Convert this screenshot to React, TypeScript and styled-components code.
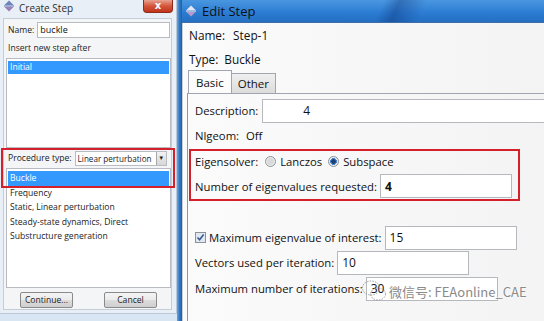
import React from "react";
import styled, { createGlobalStyle } from "styled-components";

const Global = createGlobalStyle`
  html, body { margin: 0; padding: 0; }
  body {
    width: 544px; height: 321px; overflow: hidden;
    background: #cfe0f1;
    font-family: "Open Sans", "Noto Sans", sans-serif;
  }
`;

const Desktop = styled.div`
  position: relative;
  display: flex;
  width: 544px;
  height: 321px;
  overflow: hidden;
  background: linear-gradient(180deg, #e4edf7 0%, #d8e6f4 100%);
`;

/* ---------- left dialog ---------- */
const LeftWin = styled.div`
  position: relative;
  width: 177px;
  height: 314px;
  flex-shrink: 0;
  display: flex;
  flex-direction: column;
  background: #e9eff6;
  border-right: 1px solid #b9c9da;
  border-bottom: 1px solid #b9c9da;
  box-sizing: border-box;
`;

const LeftTitle = styled.div`
  height: 18px;
  display: flex;
  align-items: flex-start;
  padding-left: 3px;
  font-size: 10px;
  color: #2b2b2b;
  line-height: 17px;
  gap: 4px;
`;

const TitleText = styled.span`
  flex: 1;
`;

const CloseBtn = styled.div`
  width: 30px;
  height: 13px;
  margin-right: 3px;
  border-radius: 0 0 4px 4px;
  background: linear-gradient(180deg, #e8a391 0%, #d4553a 50%, #c0341d 100%);
  border: 1px solid #8e2b1b;
  border-top: none;
  box-sizing: border-box;
  display: flex;
  align-items: center;
  justify-content: center;
  color: #fff;
  font-size: 10px;
  font-weight: bold;
  line-height: 1;
  font-family: "DejaVu Sans", sans-serif;
`;

const LeftBody = styled.div`
  flex: 1;
  margin: 0 4px 3px 3px;
  background: #f4f5f6;
  border: 1px solid #c4cdd8;
  display: flex;
  flex-direction: column;
  padding: 2px 1px 0 1px;
  font-size: 8.6px;
  color: #222;
`;

const SmallRow = styled.div<{ $h?: number }>`
  display: flex;
  align-items: center;
  height: ${(p) => p.$h ?? 16}px;
  padding-left: 3px;
  gap: 3px;
  white-space: nowrap;
`;

const SmallInput = styled.div<{ $w: number }>`
  width: ${(p) => p.$w}px;
  height: 16px;
  box-sizing: border-box;
  background: #fff;
  border: 1px solid #b8bcc2;
  display: flex;
  align-items: center;
  padding-left: 2px;
  font-size: 9px;
  color: #111;
`;

const ListBox = styled.div<{ $h: number }>`
  margin: 0 0 0 1px;
  width: 165px;
  height: ${(p) => p.$h}px;
  box-sizing: border-box;
  background: #fff;
  border: 1px solid #b8bcc2;
  padding-top: 2px;
  display: flex;
  flex-direction: column;
`;

const ListItem = styled.div<{ $sel?: boolean; $h?: number }>`
  height: ${(p) => p.$h ?? 14.5}px;
  line-height: ${(p) => p.$h ?? 14.5}px;
  padding-left: 2px;
  margin: 0 1px;
  background: ${(p) => (p.$sel ? "#3399ff" : "transparent")};
  color: ${(p) => (p.$sel ? "#fff" : "#222")};
  font-size: 8.6px;
  white-space: nowrap;
`;

const Combo = styled.div`
  width: 92px;
  height: 15px;
  flex-shrink: 0;
  margin-left: auto;
  margin-right: 4px;
  box-sizing: border-box;
  background: #fff;
  border: 1px solid #b8bcc2;
  display: flex;
  align-items: center;
  padding-left: 2px;
  font-size: 8.1px;
  color: #222;
`;

const ComboText = styled.span`
  flex: 1;
  white-space: nowrap;
  overflow: hidden;
`;

const ComboArrow = styled.div`
  width: 9px;
  height: 13px;
  background: linear-gradient(180deg, #f2f2f2, #d6d6d6);
  border-left: 1px solid #a8a8a8;
  display: flex;
  align-items: center;
  justify-content: center;
  font-size: 6px;
  color: #222;
`;

const ButtonRow = styled.div`
  display: flex;
  gap: 31px;
  padding-left: 15px;
  margin-top: 4px;
`;

const WinButton = styled.div`
  width: 53px;
  height: 16px;
  box-sizing: border-box;
  border: 1px solid #8a8a8a;
  border-radius: 2px;
  background: linear-gradient(180deg, #f4f4f4 0%, #ebebeb 50%, #dcdcdc 51%, #cfcfcf 100%);
  display: flex;
  align-items: center;
  justify-content: center;
  font-size: 8.6px;
  color: #222;
`;

const Highlight = styled.div<{ $x: number; $y: number; $w: number; $h: number }>`
  position: absolute;
  left: ${(p) => p.$x}px;
  top: ${(p) => p.$y}px;
  width: ${(p) => p.$w}px;
  height: ${(p) => p.$h}px;
  box-sizing: border-box;
  border: 2px solid #d4202a;
  pointer-events: none;
`;

/* ---------- strip ---------- */
const Strip = styled.div`
  width: 5px;
  flex-shrink: 0;
  height: 321px;
  background: linear-gradient(90deg, #6aa6dc 0%, #2f78c4 50%, #1e5fa8 100%);
`;

/* ---------- right dialog ---------- */
const RightWin = styled.div`
  flex: 1;
  display: flex;
  flex-direction: column;
  background: #f4f6f8;
`;

const RightTitle = styled.div`
  height: 22px;
  display: flex;
  align-items: center;
  gap: 5px;
  padding-left: 3px;
  background:
    linear-gradient(115deg, transparent 0%, transparent 52%, rgba(10, 40, 110, 0.35) 56%, transparent 63%, transparent 100%),
    linear-gradient(180deg, #4a97e0 0%, #2a7bd2 60%, #246fc2 100%);
  font-size: 13px;
  color: #111;
  border-bottom: 1px solid #3d6ea8;
`;

const RightBody = styled.div`
  flex: 1;
  display: flex;
  flex-direction: column;
  border-left: 1px solid #c9ced4;
  background: linear-gradient(90deg, #fbfbfb 0%, #f3f3f3 100%);
  font-size: 11.3px;
  color: #111;
`;

const InfoRow = styled.div<{ $h: number }>`
  height: ${(p) => p.$h}px;
  display: flex;
  align-items: center;
  padding-left: 6px;
  font-size: 11.8px;
`;

const Label = styled.span<{ $gap?: number }>`
  margin-right: ${(p) => p.$gap ?? 4}px;
  white-space: nowrap;
`;

const Tabs = styled.div`
  display: flex;
  align-items: flex-end;
  height: 23px;
  padding-left: 5px;
`;

const Tab = styled.div<{ $active?: boolean }>`
  height: ${(p) => (p.$active ? 23 : 20)}px;
  padding: 0 ${(p) => (p.$active ? 7 : 6)}px;
  display: flex;
  align-items: center;
  box-sizing: border-box;
  border: 1px solid #9ea6af;
  border-bottom: none;
  background: ${(p) => (p.$active ? "#fcfcfc" : "linear-gradient(180deg,#efefef,#dcdcdc)")};
  margin-left: ${(p) => (p.$active ? 0 : -1)}px;
  font-size: 11.5px;
`;

const Panel = styled.div`
  flex: 1;
  border-top: 1px solid #9ea6af;
  border-left: 1px solid #8e969f;
  margin-left: 4px;
  display: flex;
  flex-direction: column;
  padding-left: 7px;
  padding-top: 4px;
`;

const FormRow = styled.div<{ $h: number; $mt?: number }>`
  height: ${(p) => p.$h}px;
  margin-top: ${(p) => p.$mt ?? 0}px;
  display: flex;
  align-items: center;
`;

const TextBox = styled.div<{ $w: number; $bold?: boolean; $pl?: number }>`
  width: ${(p) => p.$w}px;
  height: 24px;
  flex-shrink: 0;
  box-sizing: border-box;
  background: #fff;
  border: 1px solid #b5b9be;
  display: flex;
  align-items: center;
  padding-left: ${(p) => p.$pl ?? 4}px;
  font-size: 12px;
  font-weight: ${(p) => (p.$bold ? 700 : 400)};
  color: #111;
`;

const Radio = styled.span<{ $on?: boolean }>`
  width: 11px;
  height: 11px;
  border-radius: 50%;
  box-sizing: border-box;
  border: 1px solid #8e9296;
  background: ${(p) =>
    p.$on
      ? "radial-gradient(circle, #1c3f75 0 2px, #4b83c8 2.5px 3.2px, #e9eef4 3.6px)"
      : "radial-gradient(circle, #d8dadc 0 3px, #eceeef 4px)"};
  margin-right: 4px;
  flex-shrink: 0;
`;

const Check = styled.span`
  width: 11px;
  height: 11px;
  box-sizing: border-box;
  border: 1px solid #8e9296;
  background: #dfe8f3;
  margin-right: 3px;
  display: flex;
  align-items: center;
  justify-content: center;
  flex-shrink: 0;
`;

const Watermark = styled.div`
  position: absolute;
  left: 361px;
  top: 279px;
  display: flex;
  align-items: center;
  gap: 2px;
  color: #8a8a8a;
  font-family: "Noto Sans CJK SC", "Open Sans", sans-serif;
  font-size: 13px;
  text-shadow: 0 0 2px #fff, 0 0 2px #fff;
  pointer-events: none;
`;

const StepIcon = ({ c1, c2 }: { c1: string; c2: string }) => (
  <svg width="12" height="12" viewBox="0 0 12 12">
    <path d="M6 0.5 L10.5 5 H1.5 Z" fill={c1} />
    <path d="M6 11.5 L10.5 7 H1.5 Z" fill={c2} />
    <rect x="1" y="5.4" width="10" height="1.2" fill={c1} />
  </svg>
);

export default function App() {
  return (
    <Desktop>
      <Global />
      <LeftWin>
        <LeftTitle>
          <StepIcon c1="#6c84b8" c2="#9b80b9" />
          <TitleText>Create Step</TitleText>
          <CloseBtn>x</CloseBtn>
        </LeftTitle>
        <LeftBody>
          <SmallRow $h={17}>
            <span>Name:</span>
            <SmallInput $w={137}>buckle</SmallInput>
          </SmallRow>
          <SmallRow $h={20}>Insert new step after</SmallRow>
          <ListBox $h={90}>
            <ListItem $sel $h={13}>Initial</ListItem>
          </ListBox>
          <SmallRow $h={20}>
            <span>Procedure type:</span>
            <Combo>
              <ComboText>Linear perturbation</ComboText>
              <ComboArrow>▼</ComboArrow>
            </Combo>
          </SmallRow>
          <ListBox $h={120}>
            <ListItem $sel>Buckle</ListItem>
            <ListItem>Frequency</ListItem>
            <ListItem>Static, Linear perturbation</ListItem>
            <ListItem>Steady-state dynamics, Direct</ListItem>
            <ListItem>Substructure generation</ListItem>
          </ListBox>
          <ButtonRow>
            <WinButton>Continue...</WinButton>
            <WinButton>Cancel</WinButton>
          </ButtonRow>
        </LeftBody>
        <Highlight $x={1} $y={148} $w={174} $h={40} />
      </LeftWin>
      <Strip />
      <RightWin>
        <RightTitle>
          <StepIcon c1="#e6e6f2" c2="#b79ac8" />
          <span>Edit Step</span>
        </RightTitle>
        <RightBody>
          <InfoRow $h={24}>
            <Label $gap={8}>Name:</Label>
            <span>Step-1</span>
          </InfoRow>
          <InfoRow $h={23}>
            <Label $gap={6}>Type:</Label>
            <span>Buckle</span>
          </InfoRow>
          <Tabs>
            <Tab $active>Basic</Tab>
            <Tab>Other</Tab>
          </Tabs>
          <Panel>
            <FormRow $h={25}>
              <Label $gap={4}>Description:</Label>
              <TextBox $w={300} $pl={40}>4</TextBox>
            </FormRow>
            <FormRow $h={25}>
              <Label $gap={7}>Nlgeom:</Label>
              <span>Off</span>
            </FormRow>
            <FormRow $h={26}>
              <Label $gap={7}>Eigensolver:</Label>
              <Radio />
              <Label $gap={6}>Lanczos</Label>
              <Radio $on />
              <Label>Subspace</Label>
            </FormRow>
            <FormRow $h={24}>
              <Label $gap={3}>Number of eigenvalues requested:</Label>
              <TextBox $w={132} $bold>4</TextBox>
            </FormRow>
            <FormRow $h={25} $mt={27}>
              <Check>
                <svg width="9" height="9" viewBox="0 0 9 9">
                  <path d="M1.5 4.5 L3.6 6.8 L7.6 1.6" stroke="#3b5a8c" strokeWidth="1.6" fill="none" />
                </svg>
              </Check>
              <Label $gap={3}>Maximum eigenvalue of interest:</Label>
              <TextBox $w={132}>15</TextBox>
            </FormRow>
            <FormRow $h={25}>
              <Label $gap={3}>Vectors used per iteration:</Label>
              <TextBox $w={132}>10</TextBox>
            </FormRow>
            <FormRow $h={27}>
              <Label $gap={3}>Maximum number of iterations:</Label>
              <TextBox $w={132}>30</TextBox>
            </FormRow>
          </Panel>
        </RightBody>
      </RightWin>
      <Highlight $x={189} $y={149} $w={331} $h={52} />
      <Watermark>
        <svg width="26" height="24" viewBox="0 0 26 24">
          <g fill="none" stroke="#9a9a9a" strokeWidth="1" strokeDasharray="1.5 1.2">
            <ellipse cx="10" cy="9" rx="8.5" ry="7" />
            <ellipse cx="17" cy="15" rx="7.5" ry="6" />
          </g>
        </svg>
        <span>微信号: FEAonline_CAE</span>
      </Watermark>
    </Desktop>
  );
}
